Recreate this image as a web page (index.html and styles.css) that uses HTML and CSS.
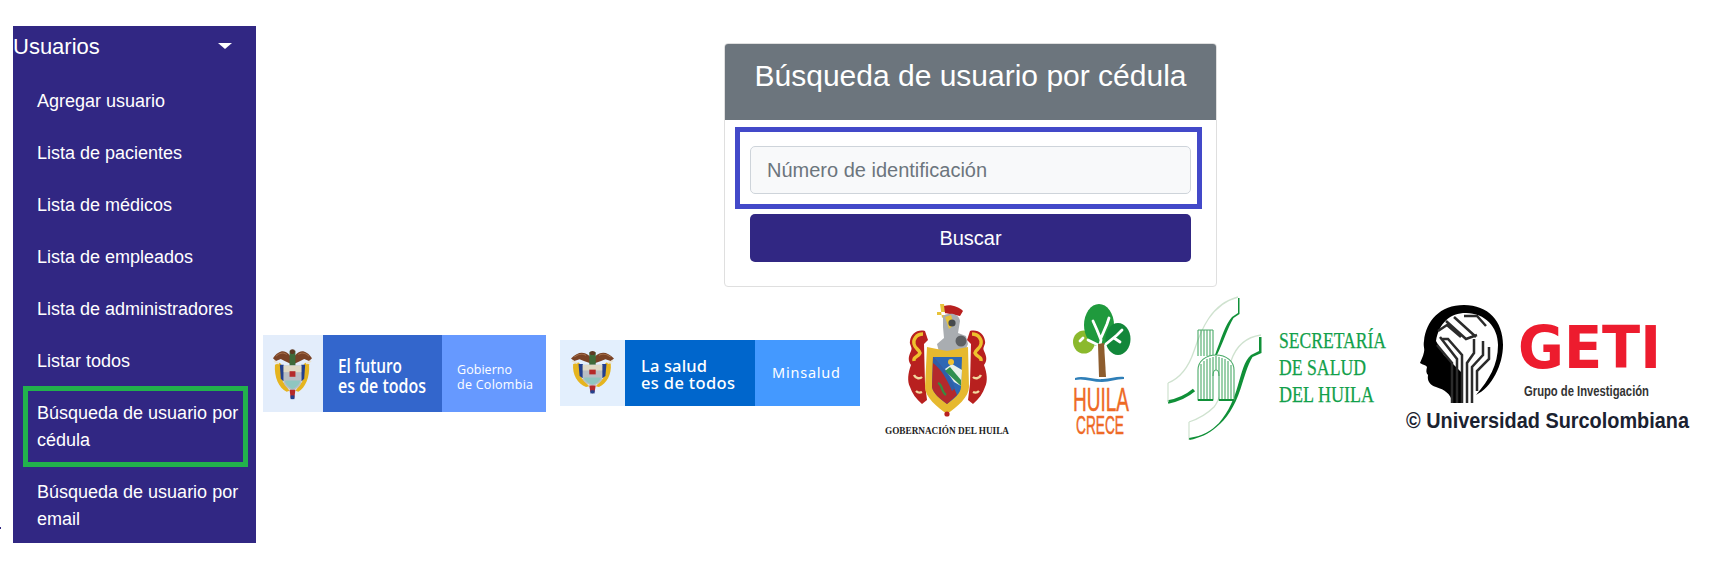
FILE: index.html
```html
<!DOCTYPE html>
<html lang="es">
<head>
<meta charset="utf-8">
<title>Búsqueda de usuario por cédula</title>
<link rel="stylesheet" href="styles.css">
</head>
<body>
<svg class="defs" width="0" height="0" aria-hidden="true">
  <symbol id="crest" viewBox="0 0 40 58" preserveAspectRatio="none">
    <path d="M20 14C16 4 8 0 0 12l3 3 5-2 4 2 6 3z" fill="#7a4326"/>
    <path d="M20 14c4-10 12-14 20-2l-3 3-5-2-4 2-6 3z" fill="#7a4326"/>
    <path d="M3 10c3-3 7-5 11-2M37 10c-3-3-7-5-11-2" stroke="#a9744e" stroke-width="1" fill="none"/>
    <path d="M17 4h6v16h-6z" fill="#3f6b3a"/>
    <circle cx="20" cy="5" r="2.6" fill="#5d3a22"/>
    <path d="M2 19l5-2 4 5-1 15 7 10-3 1C6 44 1 32 2 19z" fill="#e5b41f"/>
    <path d="M38 19l-5-2-4 5 1 15-7 10 3 1c7-4 12-16 11-29z" fill="#e5b41f"/>
    <path d="M7 19h4v18l-3-3zM33 19h-4v18l3-3z" fill="#24408e"/>
    <path d="M11 20h18v17c0 5-5 8-9 10-4-2-9-5-9-10z" fill="#b9bec4"/>
    <path d="M11 20h18v7H11z" fill="#dfd9c4"/>
    <path d="M12 36h16c-1 5-5 8-8 9-3-1-7-4-8-9z" fill="#8fc6c0"/>
    <path d="M17 26h6v6h-6z" fill="#b52a2a"/>
    <path d="M17 46h6l-1 8-2 2-2-2z" fill="#b52a2a"/>
    <path d="M18 52h4v4h-4z" fill="#24408e"/>
    <path d="M1 15l5 3M39 15l-5 3" stroke="#e9e2d0" stroke-width="2"/>
  </symbol>
</svg>
<i class="stray"></i>
<div class="page">
  <nav class="sidebar">
    <div class="sidebar-head"><span>Usuarios</span><i class="caret"></i></div>
    <ul class="menu">
      <li><a>Agregar usuario</a></li>
      <li><a>Lista de pacientes</a></li>
      <li><a>Lista de médicos</a></li>
      <li><a>Lista de empleados</a></li>
      <li><a>Lista de administradores</a></li>
      <li><a>Listar todos</a></li>
      <li class="active"><a>Búsqueda de usuario por cédula</a></li>
      <li><a>Búsqueda de usuario por email</a></li>
    </ul>
  </nav>
  <main class="main">
    <section class="card">
      <h3 class="card-head">Búsqueda de usuario por cédula</h3>
      <div class="card-body">
        <div class="field-mark"><input class="field" type="text" placeholder="Número de identificación"></div>
        <button class="btn" type="button">Buscar</button>
      </div>
    </section>
    <div class="logos">
      <svg class="logo logo-gob" width="283" height="77" viewBox="0 0 283 77">
        <rect width="60" height="77" fill="#e3edfb"/>
        <rect x="60" width="119" height="77" fill="#3366cc"/>
        <rect x="179" width="104" height="77" fill="#6699ff"/>
        <use href="#crest" x="10" y="12" width="39" height="54"/>
        <text class="t-gov" x="75" y="38" font-size="19" textLength="64" lengthAdjust="spacingAndGlyphs">El futuro</text>
        <text class="t-gov" x="75" y="58" font-size="19" textLength="88" lengthAdjust="spacingAndGlyphs">es de todos</text>
        <text class="t-gov2" x="194" y="39" font-size="12.5" textLength="55">Gobierno</text>
        <text class="t-gov2" x="194" y="54" font-size="12.5" textLength="76">de Colombia</text>
      </svg>
      <svg class="logo logo-min" width="300" height="66" viewBox="0 0 300 66">
        <rect width="65" height="66" fill="#e3effd"/>
        <rect x="65" width="130" height="66" fill="#0066cc"/>
        <rect x="195" width="105" height="66" fill="#4499ff"/>
        <use href="#crest" x="11" y="9" width="43" height="46"/>
        <text class="t-min" x="81" y="32" font-size="16.5" textLength="66">La salud</text>
        <text class="t-min" x="81" y="49" font-size="16.5" textLength="94">es de todos</text>
        <text class="t-min2" x="212" y="38" font-size="14.5" textLength="68">Minsalud</text>
      </svg>
      <svg class="logo logo-gober" width="130" height="137" viewBox="0 0 130 137">
        <path d="M57 1l2 14 4-3-2-11zM54 9h9v3h-9z" fill="#e8c33a"/>
        <path d="M61 3c7-2 15 1 19 5l-3 5-15-3z" fill="#b8201f"/>
        <path d="M60 13c6-4 16-3 17 5l-2 12 8 3 2 8-3 7-14 4-12-3-2-8 7-6-1-11z" fill="#a9adb1"/>
        <path d="M62 14l6-2 3 10-5 4z" fill="#e8c33a"/>
        <circle cx="69" cy="20" r="3.6" fill="#45494c"/>
        <circle cx="78" cy="38" r="5.5" fill="#5d6063"/>
        <path d="M42 28c-8-2-14 3-15 10-1 4 3 6 1 10-3 6-3 10 0 14-3 8-4 16-1 22 2 6 6 12 12 17l5-4-2-16-1-40 4-4z" fill="#b8201f"/>
        <path d="M87 28c8-2 14 3 15 10 1 4-3 6-1 10 3 6 3 10 0 14 3 8 4 16 1 22-2 6-6 12-12 17l-5-4 2-16 1-40-4-4z" fill="#b8201f"/>
        <path d="M40 31c-7 0-10 6-9 10 1 5 5 5 6 9-2 5-7 3-6 8M89 31c7 0 10 6 9 10-1 5-5 5-6 9 2 5 7 3 6 8" stroke="#eec22e" stroke-width="3.4" fill="none"/>
        <path d="M31 72c2 4 6 4 8 2M98 72c-2 4-6 4-8 2M33 88c2 2 4 2 6 1M96 88c-2 2-4 2-6 1" stroke="#f1d9a0" stroke-width="2.4" fill="none"/>
        <path d="M44 44l20 4 21-4 1 40c0 10-12 20-22 27-10-7-22-17-22-27z" fill="#e6b92f"/>
        <path d="M50 54h29l-1 30c0 6-7 12-14 17-7-5-14-11-15-17z" fill="#2e68b4"/>
        <path d="M50 54c8 8 17 20 24 38l-10 9c-7-5-14-11-15-17z" fill="#b4292c"/>
        <path d="M50 54c9 9 16 18 22 31l-3 3c-5-12-11-22-19-28z" fill="#2f5fa8"/>
        <path d="M62 66l7-5 10 6-1 16-7-4z" fill="#e9f1ea"/>
        <path d="M62 68l5-4 11 13v6z" fill="#2f8f4f"/>
        <circle cx="68" cy="59" r="3" fill="#f2c230"/>
        <path d="M55 80c5 2 3 9 8 12" stroke="#3a8a3f" stroke-width="2.4" fill="none"/>
        <circle cx="64" cy="111" r="2.6" fill="#b8201f"/>
        <text class="t-gober" x="2" y="131" font-size="9.6" textLength="124" lengthAdjust="spacingAndGlyphs">GOBERNACIÓN DEL HUILA</text>
      </svg>
      <svg class="logo logo-huila" width="66" height="136" viewBox="0 0 66 136">
        <ellipse cx="15" cy="40" rx="11" ry="11.5" fill="#8bb92d"/>
        <ellipse cx="30" cy="23" rx="15" ry="21" fill="#1f9a3d"/>
        <ellipse cx="49" cy="37" rx="12.5" ry="16" fill="#12873a"/>
        <path d="M30 58V48l2-10-4-10-4-9M31 44L19 38M14 36l-3 3M32 36l6-14 2-6M37 42l11-9 5-5M45 36l6 4" stroke="#fff" stroke-width="2.8" fill="none" stroke-linecap="round"/>
        <path d="M29 42l6-1 2 34h-7z" fill="#8e5d2e"/>
        <path d="M6 76c8-3 18 2 28 1 8 0 14-3 21-2v2c-8 0-14 3-22 3-10 0-18-4-27-2z" fill="#2f7fb8"/>
        <text class="t-huila" x="4" y="109" font-size="34" textLength="56" lengthAdjust="spacingAndGlyphs">HUILA</text>
        <text class="t-huila" x="7" y="132" font-size="25" textLength="48" lengthAdjust="spacingAndGlyphs">CRECE</text>
      </svg>
      <svg class="logo logo-sec" width="226" height="146" viewBox="0 0 226 146">
        <path d="M3 87c10-4 20-14 26-32C36 34 46 8 73 1" stroke="#cfe2cf" stroke-width="1.3" fill="none"/>
        <path d="M3 106c10-2 19-6 26-12" stroke="#109038" stroke-width="3.4" fill="none"/>
        <path d="M3 87v19" stroke="#cfe2cf" stroke-width="1.2"/>
        <path d="M50 59c6-16 10-30 17-38l6-4V2h1.500v16l-6 4c-6 10-10 24-17 38z" fill="#109038"/>
        <path d="M24 126c12-4 20-10 25-15 8-10 11-28 17-46 5-15 16-24 30-26" stroke="#cfe2cf" stroke-width="1.3" fill="none"/>
        <path d="M24 126v18" stroke="#cfe2cf" stroke-width="1.2"/>
        <path d="M24 142c14-2 22-7 30-15 10-12 15-24 19-38 4-13 6-24 13-30l8-4V41h2.500v16l-9 4c-5 8-8 20-12 32-6 18-14 30-24 38-8 7-17 11-27 13z" fill="#109038"/>
        <path d="M33 34v26M36 34v26M39 34v26M42 34v26M45 34v26M48 34v26M33 34h15" stroke="#4aaa68" stroke-width="1.1" fill="none"/>
        <path d="M33 104V74c0-9 8-15 18-15s18 6 18 15v30H54V80c0-4-1-6-3-6s-3 2-3 6v24z" fill="#fff" stroke="#4aaa68" stroke-width="1.100"/>
        <path d="M36 104V68M39 104V65M42 104V63M45 104V62M48 80V61M51 74V60M54 80V61M57 104V62M60 104V63M63 104V65M66 104V69" stroke="#4aaa68" stroke-width="1.100"/>
        <path d="M33 104h15M54 104h15" stroke="#109038" stroke-width="1.800"/>
        <text class="t-sec" x="114" y="52" font-size="22.500" textLength="107" lengthAdjust="spacingAndGlyphs">SECRETARÍA</text>
        <text class="t-sec" x="114" y="79" font-size="22.500" textLength="87" lengthAdjust="spacingAndGlyphs">DE SALUD</text>
        <text class="t-sec" x="114" y="106" font-size="22.500" textLength="95" lengthAdjust="spacingAndGlyphs">DEL HUILA</text>
      </svg>
      <svg class="logo logo-geti" width="287" height="132" viewBox="0 0 287 132">
        <path d="M60 2C36 2 22 18 20 38c-1 5 1 8 0 11-1 5-3 8-4 11 3 2 6 2 7 4-1 4-1 6 1 8-1 6 2 10 8 12 9 3 14 6 17 16h9V70L40 52 32 38c3-18 14-28 30-28 19 0 32 14 32 32 0 20-9 35-22 50 16-8 27-30 27-50C99 18 84 2 60 2z" fill="#000"/>
        <path d="M48 100V60L33 42M53 100V56L36 34M58 100V52L44 36h-6M63 100V60l7-10V36M68 100V64l11-12V38M73 88V68l12-12V44M50 14l22 20M42 18l20 18 11-4M34 28l9-6 14 12M60 13h13l9 10" stroke="#2b2b2b" stroke-width="2.500" fill="none"/>
        <text class="t-geti" x="114" y="65" font-size="59" textLength="143" lengthAdjust="spacingAndGlyphs">GETI</text>
        <text class="t-grupo" x="120" y="93" font-size="15" textLength="125" lengthAdjust="spacingAndGlyphs">Grupo de Investigación</text>
        <text class="t-usco" x="2" y="125" font-size="22" textLength="283" lengthAdjust="spacingAndGlyphs">© Universidad Surcolombiana</text>
      </svg>
    </div>
  </main>
</div>
</body>
</html>
```
FILE: styles.css
```css
* { box-sizing: border-box; }
html, body { margin: 0; padding: 0; background: #fff; }
body { font-family: "Liberation Sans", Arial, sans-serif; font-size: 18px; color: #212529; overflow: hidden; height: 571px; }
.defs { position: absolute; }
.stray { position: absolute; left: 0; top: 527px; width: 1px; height: 2px; background: #312783; }
.page { display: flex; align-items: flex-start; padding: 26px 0 0 13px; }

.sidebar { width: 243px; height: 517px; background: #312783; color: #fff; flex: none; overflow: hidden; }
.sidebar-head { display: flex; justify-content: space-between; align-items: center; height: 42px; padding-right: 24px; font-size: 22px; line-height: 26px; }
.caret { width: 0; height: 0; border-left: 7px solid transparent; border-right: 7px solid transparent; border-top: 6px solid #fff; margin-bottom: 2px; }
.menu { list-style: none; margin: 7px 0 0; padding: 0; }
.menu li { padding: 12.5px 8px 12.5px 24px; line-height: 27px; position: relative; }
.menu a { display: block; color: #fff; }
.menu .active::after { content: ""; position: absolute; inset: -1px 8px -1px 10px; border: 5px solid #22b14c; }

.main { flex: 1; margin-left: 7px; min-width: 0; }
.card { width: 493px; margin: 17px 0 0 461px; height: 244px; border: 1px solid #dfdfdf; border-radius: 4px; overflow: hidden; }
.card-head { margin: 0; height: 76px; background: #6c757d; color: #fff; font-size: 30px; font-weight: 400; line-height: 34px; padding-top: 15px; text-align: center; }
.card-body { padding: 7px 14px 0 10px; }
.field-mark { border: 5px solid #4349c9; padding: 14px 6px 10px 10px; margin-bottom: 5px; }
.field { display: block; width: 100%; height: 48px; padding: 8px 16px; background: #f8f9fa; border: 1px solid #ced4da; border-radius: 5px; font: 20px "Liberation Sans", Arial, sans-serif; color: #495057; }
.field::placeholder { color: #6c757d; opacity: 1; }
.btn { display: block; width: 441px; margin-left: 15px; height: 48px; background: #312783; color: #fff; border: 0; border-radius: 5px; font: 20px "Liberation Sans", Arial, sans-serif; }

.logos { display: flex; align-items: flex-start; margin-top: 9px; }
.logo { display: block; flex: none; }
.logo-gob { margin-top: 39px; }
.logo-min { margin: 44px 0 0 14px; }
.logo-gober { margin: 7px 0 0 23px; }
.logo-huila { margin: 6px 0 0 56px; }
.logo-sec { margin: 0 0 0 30px; }
.logo-geti { margin: 7px 0 0 13px; }

.t-gov { font-family: "Open Sans", sans-serif; font-weight: 600; fill: #fff; }
.t-gov2 { font-family: "Open Sans", sans-serif; fill: #fff; }
.t-min, .t-min2 { font-family: "Noto Sans", sans-serif; fill: #fff; font-weight: 500; }
.t-min2 { font-weight: 400; }
.t-gober { font-family: "Liberation Serif", serif; font-weight: 700; fill: #222; }
.t-huila { font-family: "Liberation Sans", sans-serif; fill: #ee6a25; stroke: #ee6a25; stroke-width: .5; }
.t-sec { font-family: "Liberation Serif", serif; fill: #11a04a; stroke: #11a04a; stroke-width: .25; }
.t-geti { font-family: "DejaVu Sans", sans-serif; font-weight: 700; fill: #ed1c2e; }
.t-grupo { font-family: "Liberation Sans", sans-serif; font-weight: 700; fill: #333; }
.t-usco { font-family: "Liberation Sans", sans-serif; font-weight: 700; fill: #1b2230; }
```
